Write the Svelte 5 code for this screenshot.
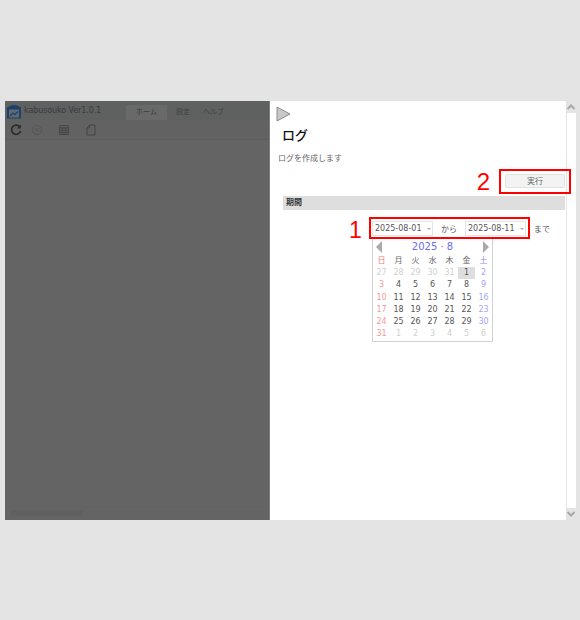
<script lang="ts">
	const weekdays = [
		{ label: '日', tone: 'sun' },
		{ label: '月', tone: '' },
		{ label: '火', tone: '' },
		{ label: '水', tone: '' },
		{ label: '木', tone: '' },
		{ label: '金', tone: '' },
		{ label: '土', tone: 'sat' }
	];

	const days = [
		[27, 28, 29, 30, 31, 1, 2],
		[3, 4, 5, 6, 7, 8, 9],
		[10, 11, 12, 13, 14, 15, 16],
		[17, 18, 19, 20, 21, 22, 23],
		[24, 25, 26, 27, 28, 29, 30],
		[31, 1, 2, 3, 4, 5, 6]
	];

	function dayClass(row: number, col: number): string {
		const prevMonth = row === 0 && col < 5;
		const nextMonth = row === 5 && col > 0;
		const classes = [];
		if (prevMonth || nextMonth) classes.push('other');
		else if (col === 0) classes.push('sun');
		else if (col === 6) classes.push('sat');
		if (row === 0 && col === 5) classes.push('selected');
		return classes.join(' ');
	}
</script>

<div class="page">
	<div class="shell">
		<section class="app">
			<header class="titlebar">
				<svg class="logo" viewBox="0 0 16 16" width="16" height="16">
					<path d="M1 15.5 V4.5 Q8 -0.5 15 4.5 V15.5 Z" fill="#1d3f68" />
					<rect x="3" y="6.5" width="10" height="8" fill="#5f6a72" />
					<path d="M4 13 L7 10 L9 11.5 L12 8.5" fill="none" stroke="#1d3f68" stroke-width="1.1" />
				</svg>
				<span class="app-name">kabusouko Ver1.0.1</span>
				<nav class="tabs">
					<span class="tab active">ホーム</span>
					<span class="tab">設定</span>
					<span class="tab">ヘルプ</span>
				</nav>
			</header>
			<div class="toolbar">
				<svg viewBox="0 0 12 12" width="12" height="12" class="tool">
					<path d="M10 3.2 A4.6 4.6 0 1 0 10.6 7" fill="none" stroke="#2b2b2b" stroke-width="1.6" />
					<path d="M10.8 0.6 V4.4 H7 Z" fill="#2b2b2b" />
				</svg>
				<svg viewBox="0 0 12 12" width="12" height="12" class="tool">
					<circle cx="6" cy="6" r="4.6" fill="none" stroke="#565656" />
					<path d="M4 4 L8 8 M8 4 L4 8" stroke="#565656" />
				</svg>
				<svg viewBox="0 0 12 12" width="12" height="12" class="tool">
					<path d="M1.5 1.5 H10.5 V10.5 H1.5 Z" fill="#5c5c5c" stroke="#454545" stroke-width="0.8" />
					<path d="M1.5 3.8 H10.5 M1.5 6.2 H10.5 M1.5 8.4 H10.5 M4.5 3.8 V10.5 M7.5 3.8 V10.5" stroke="#454545" stroke-width="0.8" />
				</svg>
				<svg viewBox="0 0 12 12" width="12" height="12" class="tool">
					<path d="M2 4 L4.5 1 H10 V11 H2 Z M4.5 1 V4 H2" fill="none" stroke="#444" />
				</svg>
			</div>
			<div class="workspace"></div>
			<footer class="statusbar"><span class="status-block"></span></footer>
		</section>

		<main class="panel">
			<svg class="play" viewBox="0 0 15 16" width="15" height="16">
				<path d="M1 1 L14 8 L1 15 Z" fill="#c8c8c8" stroke="#8c8c8c" />
			</svg>
			<h1>ログ</h1>
			<p class="lead">ログを作成します</p>
			<div class="action-row">
				<span class="callout-no">2</span>
				<span class="callout-box">
					<button type="button">実行</button>
				</span>
			</div>
			<h2>期間</h2>
			<div class="period">
				<span class="callout-no small">1</span>
				<div class="range-col">
					<div class="range-line">
						<div class="range-box">
							<span class="date-input">2025-08-01<i class="caret"></i></span>
							<span class="joiner">から</span>
							<span class="date-input">2025-08-11<i class="caret"></i></span>
						</div>
						<span class="until">まで</span>
					</div>
					<div class="calendar">
						<div class="cal-head">
							<i class="arrow prev"></i>
							<span>2025 · 8</span>
							<i class="arrow next"></i>
						</div>
						<div class="cal-grid">
							{#each weekdays as day}
								<span class="cell week {day.tone}">{day.label}</span>
							{/each}
							{#each days as week, row}
								{#each week as date, col}
									<span class="cell {dayClass(row, col)}">{date}</span>
								{/each}
							{/each}
						</div>
					</div>
				</div>
			</div>
		</main>

		<aside class="scrollbar">
			<svg viewBox="0 0 10 8" width="10" height="8"><path d="M1.5 6 L5 2.5 L8.5 6" fill="none" stroke="#a8a8a8" stroke-width="2" /></svg>
			<div class="track"></div>
			<svg viewBox="0 0 10 8" width="10" height="8"><path d="M1.5 2 L5 5.5 L8.5 2" fill="none" stroke="#a8a8a8" stroke-width="2" /></svg>
		</aside>
	</div>
</div>

<style>
	:global(body) {
		margin: 0;
		background: #e4e4e4;
	}

	.page {
		height: 620px;
		padding: 101px 0 0 5px;
		box-sizing: border-box;
		font-family: 'DejaVu Sans', 'Noto Sans CJK JP', sans-serif;
		font-size: 8px;
		color: #555;
	}

	.shell {
		display: flex;
		width: 571px;
		height: 419px;
	}

	.app {
		width: 264px;
		flex-shrink: 0;
		display: flex;
		flex-direction: column;
		background: #646464;
		border-right: 1px solid #7d7d7d;
	}

	.titlebar {
		height: 19px;
		display: flex;
		align-items: center;
		background: #5f6060;
		padding-left: 1px;
	}

	.logo {
		margin-right: 2px;
	}

	.app-name {
		width: 102px;
		letter-spacing: -0.1px;
		color: #363c42;
	}

	.tabs {
		display: flex;
		align-self: flex-end;
		gap: 1px;
		font-size: 7px;
		color: #404040;
	}

	.tab {
		padding: 0 6px;
		height: 15px;
		line-height: 15px;
	}

	.tab.active {
		background: #696969;
		color: #2f3f4c;
		width: 23px;
		padding: 0 9px;
		text-align: center;
		margin-right: 2px;
	}

	.toolbar {
		height: 20px;
		display: flex;
		align-items: center;
		gap: 15px;
		padding-left: 5px;
		background: #626262;
		border-bottom: 1px solid #5e5e5e;
		box-sizing: border-box;
	}

	.toolbar svg:first-child {
		margin-right: -6px;
	}

	.workspace {
		flex: 1;
	}

	.statusbar {
		height: 14px;
		padding: 3px 6px 4px;
		box-sizing: border-box;
		border-top: 1px solid #626262;
	}

	.status-block {
		display: block;
		width: 72px;
		height: 6px;
		background: #606060;
	}

	.panel {
		width: 296px;
		flex-shrink: 0;
		background: #fff;
		box-sizing: border-box;
		padding: 5px 1px 0 8px;
		display: flex;
		flex-direction: column;
	}

	.play {
		margin-left: -2px;
		flex-shrink: 0;
	}

	h1 {
		margin: 6px 0 0 4px;
		font-size: 13px;
		line-height: 16px;
		font-weight: 500;
		color: #111;
	}

	.lead {
		margin: 9px 0 0 0;
		font-size: 8px;
		line-height: 12px;
		color: #666;
	}

	.action-row {
		display: flex;
		justify-content: flex-end;
		align-items: center;
		gap: 9px;
		margin: 4px -6px 0 0;
		height: 25px;
	}

	.callout-no {
		font-family: 'Liberation Sans', sans-serif;
		font-size: 24px;
		line-height: 25px;
		color: #f00;
	}

	.callout-box {
		width: 72px;
		height: 25px;
		flex-shrink: 0;
		box-sizing: border-box;
		border: 2px solid #f00;
		padding: 3px 4px;
		position: relative;
	}

	button {
		display: block;
		width: 60px;
		height: 14px;
		padding: 0 0 2px;
		border: 1px solid #e2e2e2;
		border-radius: 2px;
		background: #f3f3f3;
		font: inherit;
		color: #666;
	}

	h2 {
		margin: 2px 0 0 5px;
		height: 14px;
		padding-left: 3px;
		background: #dedede;
		font-size: 8px;
		line-height: 14px;
		font-weight: 700;
		color: #333;
	}

	.period {
		display: flex;
		margin-top: 6px;
		padding-left: 71px;
		gap: 9px;
	}

	.callout-no.small {
		font-size: 23px;
		width: 11px;
		line-height: 28px;
		height: 28px;
	}

	.range-line {
		display: flex;
		align-items: center;
		gap: 4px;
		height: 22px;
		margin-top: 1px;
	}

	.range-box {
		width: 161px;
		height: 22px;
		flex-shrink: 0;
		box-sizing: border-box;
		border: 2px solid #f00;
		display: flex;
		align-items: center;
		padding: 0 2px 0 1px;
		justify-content: space-between;
	}

	.date-input {
		width: 61px;
		height: 15px;
		box-sizing: border-box;
		border: 1px solid #e4e4e4;
		padding-left: 2px;
		line-height: 14px;
		position: relative;
	}

	.caret {
		position: absolute;
		right: 1px;
		top: 6px;
		border-left: 2.5px solid transparent;
		border-right: 2.5px solid transparent;
		border-top: 2.5px solid #aaa;
	}

	.calendar {
		width: 121px;
		height: 103px;
		margin-left: 3px;
		box-sizing: border-box;
		border: 1px solid #d0d0d0;
		border-top: 0;
	}

	.cal-head {
		height: 15px;
		padding: 0 3px;
		display: flex;
		align-items: center;
		justify-content: space-between;
		font-size: 10px;
		color: #6a6af0;
	}

	.arrow {
		border-top: 6px solid transparent;
		border-bottom: 6px solid transparent;
	}

	.arrow.prev {
		border-right: 6px solid #aaa;
	}

	.arrow.next {
		border-left: 6px solid #aaa;
	}

	.cal-grid {
		display: grid;
		grid-template-columns: repeat(7, 17px);
		grid-auto-rows: 12.2px;
		padding-top: 1px;
	}

	.cell {
		text-align: center;
		line-height: 12px;
	}

	.cell.sun {
		color: #f59a9a;
	}

	.cell.sat {
		color: #a4a4f4;
	}

	.cell.other {
		color: #cfcfcf;
	}

	.cell.week {
		color: #666;
	}

	.cell.week.sun {
		color: #f07878;
	}

	.cell.week.sat {
		color: #8a8af0;
	}

	.cell.selected {
		background: #dedede;
	}

	.scrollbar {
		width: 11px;
		display: flex;
		flex-direction: column;
		align-items: center;
		background: #e4e4e4;
	}

	.track {
		flex: 1;
		width: 9px;
		background: #fff;
	}

	.scrollbar svg {
		flex-shrink: 0;
		margin: 2px 0;
	}
</style>
